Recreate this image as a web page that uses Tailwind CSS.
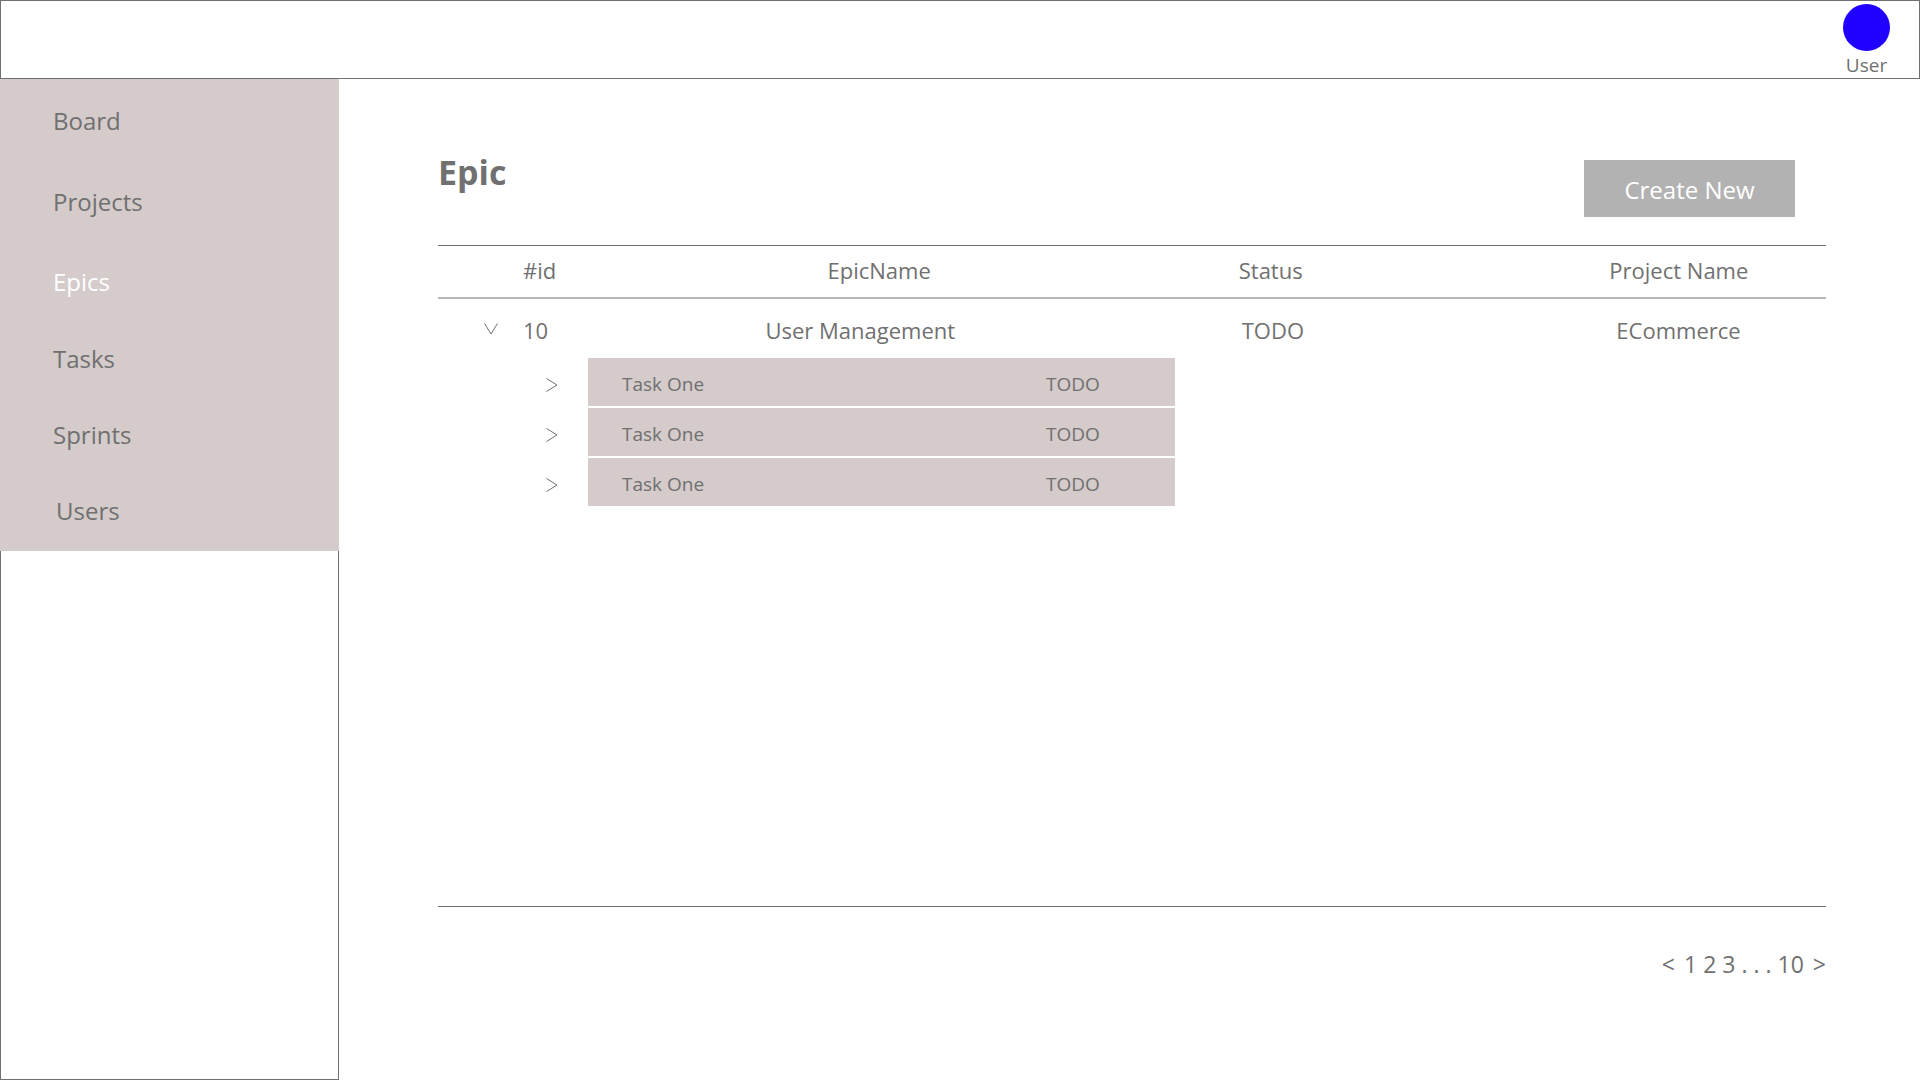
<!DOCTYPE html>
<html lang="en">
<head>
<meta charset="utf-8">
<title>Epics</title>
<script src="https://cdn.jsdelivr.net/npm/@tailwindcss/browser@4"></script>
</head>
<body class="flex min-h-screen flex-col bg-white font-['Open_Sans',sans-serif] text-[#707070]">
  <header class="flex h-[79px] shrink-0 justify-end border border-[#707070] pr-[29px]">
    <a href="#" class="flex flex-col items-center pt-[3px] text-[19px] leading-6">
      <span class="size-[47px] rounded-full bg-[#2000ff]"></span>
      <span class="pt-[2px]">User</span>
    </a>
  </header>
  <div class="flex flex-1">
    <aside class="flex w-[339px] shrink-0 flex-col">
      <nav class="flex flex-col bg-[#d4cbca] pt-px pb-[2px] text-2xl">
        <a href="#" class="flex h-[81px] items-center pl-[53px]">Board</a>
        <a href="#" class="flex h-[81px] items-center pl-[53px]">Projects</a>
        <a href="#" class="flex h-[79px] items-center pl-[53px] text-white" aria-current="page">Epics</a>
        <a href="#" class="flex h-[76px] items-center pl-[53px]">Tasks</a>
        <a href="#" class="flex h-[76px] items-center pl-[53px]">Sprints</a>
        <a href="#" class="flex h-[76px] items-center pl-[56px]">Users</a>
      </nav>
      <div class="flex-1 border-x border-b border-[#707070]"></div>
    </aside>
    <main class="flex min-w-0 flex-1 flex-col pr-[94px] pl-[99px]">
      <div class="flex h-[166px] items-start justify-between pt-[73px] pr-[31px]">
        <h1 class="text-[34px] leading-10 font-bold">Epic</h1>
        <button type="button" class="mt-2 h-[57px] w-[211px] bg-[#b2b2b2] pt-[2px] text-2xl text-white">Create New</button>
      </div>
      <div class="flex-1 border-y border-[#707070]">
        <table class="w-full table-fixed text-left text-[22px]">
          <colgroup>
            <col class="w-[21%]"><col class="w-[31%]"><col class="w-[28%]"><col class="w-[20%]">
          </colgroup>
          <thead>
            <tr class="h-[52px] border-b-2 border-[#b7b7b7]">
              <th class="pb-[2px] pl-[85px] font-normal">#id</th>
              <th class="pb-[2px] pl-[98px] font-normal">EpicName</th>
              <th class="pb-[2px] pl-[79px] font-normal">Status</th>
              <th class="pb-[2px] pl-[61px] font-normal">Project Name</th>
            </tr>
          </thead>
          <tbody>
            <tr class="h-[60px]">
              <td class="pt-1">
                <div class="flex items-center pl-[46px]">
                  <button type="button" aria-label="Collapse epic" class="mr-[25px] pb-1">
                    <svg class="h-3 w-[14px]" viewBox="0 0 14 12" fill="none" stroke="#707070"><path d="M.5.5 7 11 13.500.5"/></svg>
                  </button>
                  10
                </div>
              </td>
              <td class="pt-1 pl-[36px]">User Management</td>
              <td class="pt-1 pl-[82px]">TODO</td>
              <td class="pt-1 pl-[68px]">ECommerce</td>
            </tr>
            <tr>
              <td colspan="4">
                <ul class="flex flex-col gap-[2px] pl-[107px] text-[19px]">
                  <li class="flex h-12 items-center">
                    <button type="button" aria-label="Expand task" class="mr-[29px] pt-[6px]">
                      <svg class="h-[14px] w-[14px]" viewBox="0 0 14 14" fill="none" stroke="#707070"><path d="M1.500.5 12 7 1.500 13.500"/></svg>
                    </button>
                    <div class="flex h-full w-[587px] items-center bg-[#d4cbca] pt-1 pl-[34px]"><span class="w-[424px]">Task One</span><span>TODO</span></div>
                  </li>
                  <li class="flex h-12 items-center">
                    <button type="button" aria-label="Expand task" class="mr-[29px] pt-[6px]">
                      <svg class="h-[14px] w-[14px]" viewBox="0 0 14 14" fill="none" stroke="#707070"><path d="M1.500.5 12 7 1.500 13.500"/></svg>
                    </button>
                    <div class="flex h-full w-[587px] items-center bg-[#d4cbca] pt-1 pl-[34px]"><span class="w-[424px]">Task One</span><span>TODO</span></div>
                  </li>
                  <li class="flex h-12 items-center">
                    <button type="button" aria-label="Expand task" class="mr-[29px] pt-[6px]">
                      <svg class="h-[14px] w-[14px]" viewBox="0 0 14 14" fill="none" stroke="#707070"><path d="M1.500.5 12 7 1.500 13.500"/></svg>
                    </button>
                    <div class="flex h-full w-[587px] items-center bg-[#d4cbca] pt-1 pl-[34px]"><span class="w-[424px]">Task One</span><span>TODO</span></div>
                  </li>
                </ul>
              </td>
            </tr>
          </tbody>
        </table>
      </div>
      <nav aria-label="Pagination" class="flex h-[173px] items-start justify-end gap-[6px] pt-10 text-[23px]">
        <a href="#" aria-label="Previous page" class="pr-[3px]">&lt;</a>
        <a href="#">1</a>
        <a href="#">2</a>
        <a href="#">3</a>
        <span>. . .</span>
        <a href="#">10</a>
        <a href="#" aria-label="Next page" class="pl-[3px]">&gt;</a>
      </nav>
    </main>
  </div>
</body>
</html>
